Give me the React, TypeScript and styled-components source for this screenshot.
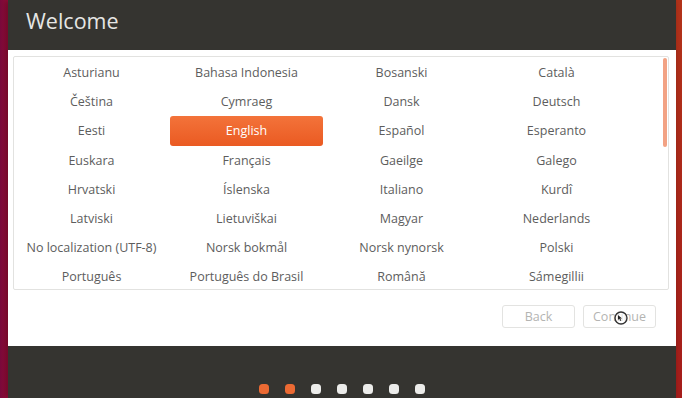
import React from 'react';
import styled, { createGlobalStyle } from 'styled-components';

const GlobalStyle = createGlobalStyle`
  html, body {
    margin: 0;
    padding: 0;
    height: 398px;
    overflow: hidden;
    background: linear-gradient(180deg, #b3331a 0%, #a51d1b 100%);
  }
  body {
    font-family: 'Open Sans', 'DejaVu Sans', sans-serif;
  }
`;

const languages = [
  'Asturianu', 'Bahasa Indonesia', 'Bosanski', 'Català',
  'Čeština', 'Cymraeg', 'Dansk', 'Deutsch',
  'Eesti', 'English', 'Español', 'Esperanto',
  'Euskara', 'Français', 'Gaeilge', 'Galego',
  'Hrvatski', 'Íslenska', 'Italiano', 'Kurdî',
  'Latviski', 'Lietuviškai', 'Magyar', 'Nederlands',
  'No localization (UTF-8)', 'Norsk bokmål', 'Norsk nynorsk', 'Polski',
  'Português', 'Português do Brasil', 'Română', 'Sámegillii',
];

const Desktop = styled.div`
  display: flex;
  height: 398px;
  background: linear-gradient(90deg, #7a0a3c 0px, #9e0c38 8px, transparent 8px);
`;

const Window = styled.div`
  margin-left: 8px;
  width: 668px;
  height: 398px;
  display: flex;
  flex-direction: column;
  background: #353430;
  box-shadow: -2px 0 6px rgba(0, 0, 0, 0.35);
`;

const Header = styled.div`
  height: 50px;
  display: flex;
  align-items: center;
  padding-left: 18px;
  padding-bottom: 10px;
  box-sizing: border-box;
  color: #e6e6e4;
  font-size: 21.5px;
`;

const Content = styled.div`
  height: 296px;
  background: #ffffff;
  padding: 6px 7px 0 5px;
  box-sizing: border-box;
  display: flex;
  flex-direction: column;
`;

const ListBox = styled.div`
  position: relative;
  height: 232px;
  border: 1px solid #e2e2e0;
  border-radius: 2px;
  overflow: hidden;
`;

const Grid = styled.div`
  display: grid;
  grid-template-columns: repeat(4, 155px);
  grid-auto-rows: 29.2px;
  padding-top: 1px;
`;

const Cell = styled.div<{ $selected?: boolean }>`
  display: flex;
  align-items: center;
  justify-content: center;
  font-size: 12.5px;
  color: ${(p) => (p.$selected ? '#ffffff' : '#5d5d5d')};
  margin: 0 1px;
  border-radius: 3px;
  background: ${(p) => (p.$selected ? 'linear-gradient(180deg, #f3733a 0%, #ea5a22 100%)' : 'transparent')};
  font-weight: ${(p) => (p.$selected ? 500 : 400)};
  white-space: nowrap;
`;

const Scrollbar = styled.div`
  position: absolute;
  right: 1px;
  top: 1px;
  width: 4px;
  height: 89px;
  border-radius: 2px;
  background: #f2a284;
`;

const ButtonRow = styled.div`
  display: flex;
  justify-content: flex-end;
  gap: 8px;
  margin-top: 15px;
  padding-right: 13px;
  position: relative;
`;

const Button = styled.div`
  width: 73px;
  height: 23px;
  box-sizing: border-box;
  border: 1px solid #e3e3e1;
  border-radius: 3px;
  display: flex;
  align-items: center;
  justify-content: center;
  font-size: 12.5px;
  color: #b4b4b2;
`;

const Cursor = styled.svg`
  position: absolute;
  right: 40px;
  top: 5px;
`;

const Footer = styled.div`
  flex: 1;
  display: flex;
  justify-content: center;
  align-items: flex-start;
  padding-top: 38px;
  gap: 16px;
`;

const Dot = styled.div<{ $active?: boolean }>`
  width: 10px;
  height: 10px;
  border-radius: 3.5px;
  background: ${(p) => (p.$active ? '#ec6a33' : '#ececea')};
`;

const App: React.FC = () => (
  <>
    <GlobalStyle />
    <Desktop>
      <Window>
        <Header>Welcome</Header>
        <Content>
          <ListBox>
            <Grid>
              {languages.map((lang) => (
                <Cell key={lang} $selected={lang === 'English'}>
                  {lang}
                </Cell>
              ))}
            </Grid>
            <Scrollbar />
          </ListBox>
          <ButtonRow>
            <Button>Back</Button>
            <Button>Continue</Button>
            <Cursor width="16" height="16" viewBox="0 0 16 16">
              <circle cx="8" cy="8" r="6" fill="rgba(255,255,255,0.6)" stroke="#333" strokeWidth="1.4" />
              <path d="M5 5 L5 10 L6.3 8.8 L7.4 11 L8.3 10.6 L7.2 8.4 L9 8.4 Z" fill="#222" />
            </Cursor>
          </ButtonRow>
        </Content>
        <Footer>
          {[0, 1, 2, 3, 4, 5, 6].map((i) => (
            <Dot key={i} $active={i < 2} />
          ))}
        </Footer>
      </Window>
    </Desktop>
  </>
);

export default App;
